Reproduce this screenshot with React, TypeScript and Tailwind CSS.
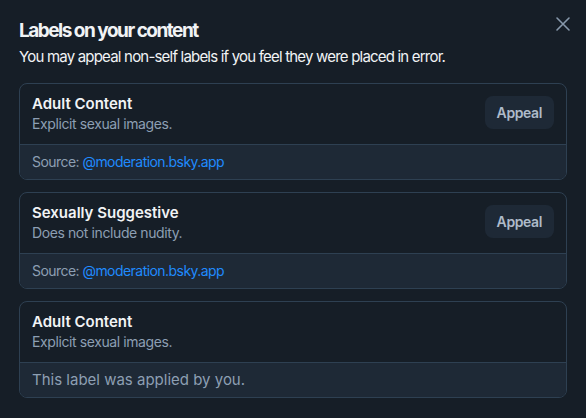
import React from "react";

type Label = {
  name: string;
  description: string;
  source?: string;
};

const labels: Label[] = [
  { name: "Adult Content", description: "Explicit sexual images.", source: "@moderation.bsky.app" },
  { name: "Sexually Suggestive", description: "Does not include nudity.", source: "@moderation.bsky.app" },
  { name: "Adult Content", description: "Explicit sexual images." },
];

const App: React.FC = () => {
  return (
    <div
      className="relative w-[586px] h-[418px] bg-[#161e27] px-[19px] pt-[17px] overflow-hidden"
      style={{ fontFamily: "Inter, 'Noto Sans', sans-serif" }}
    >
      <button className="absolute right-[15px] top-[16px] text-[#8798ab]">
        <svg width="16" height="16" viewBox="0 0 16 16" fill="none" stroke="currentColor" strokeWidth="1.6" strokeLinecap="round">
          <path d="M2 2L14 14M14 2L2 14" />
        </svg>
      </button>
      <h1 className="text-[19px] leading-[28px] font-bold text-[#f1f3f5] tracking-[-1.5px]">
        Labels on your content
      </h1>
      <p className="mt-[1px] text-[15px] leading-[22px] text-[#f1f3f5] tracking-[-0.8px]">
        You may appeal non-self labels if you feel they were placed in error.
      </p>
      <div className="mt-[15px] flex flex-col gap-[12px]">
        {labels.map((l, i) => (
          <div key={i} className="rounded-lg border border-[#2e4052] overflow-hidden">
            <div className="flex items-start justify-between pl-3 pr-3 pt-[9px] pb-[11px]">
              <div className="flex flex-col">
                <span className="text-[15px] leading-[21px] font-semibold text-[#f1f3f5]">{l.name}</span>
                <span className="text-[14px] leading-[19px] text-[#8d9fb3] tracking-[-0.4px]">{l.description}</span>
              </div>
              {l.source && (
                <button className="mt-[3px] h-[33px] px-[12px] rounded-lg bg-[#1e2936] text-[14px] font-semibold text-[#aebbc9] tracking-[-0.4px]">
                  Appeal
                </button>
              )}
            </div>
            <div
              className={
                l.source
                  ? "border-t border-[#2e4052] bg-[#1e2936] px-3 py-[7px] text-[14px] leading-[20px] text-[#8d9fb3] tracking-[-0.55px]"
                  : "border-t border-[#2e4052] bg-[#1e2936] px-3 py-[7px] text-[15px] leading-[20px] text-[#8d9fb3]"
              }
            >
              {l.source ? (
                <>
                  Source: <span className="text-[#208bfe]">{l.source}</span>
                </>
              ) : (
                "This label was applied by you."
              )}
            </div>
          </div>
        ))}
      </div>
    </div>
  );
};

export default App;
